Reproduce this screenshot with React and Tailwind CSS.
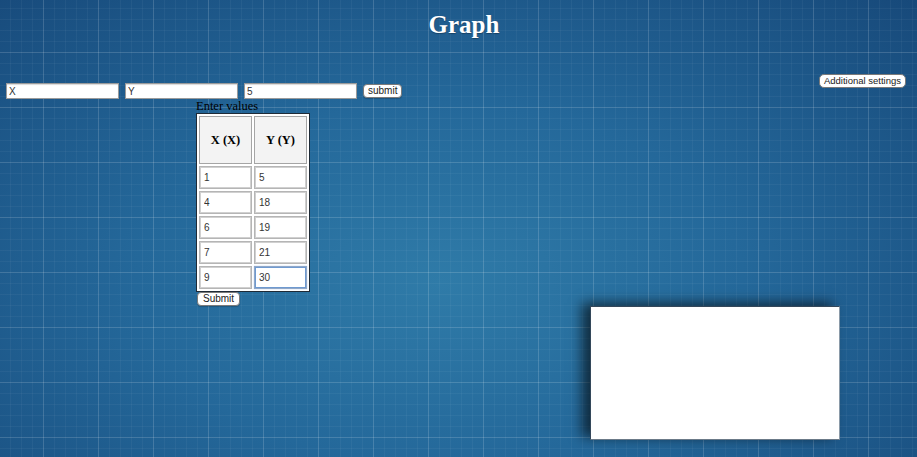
import { useState } from "react";

const ROWS = [
  { x: "1", y: "5" },
  { x: "4", y: "18" },
  { x: "6", y: "19" },
  { x: "7", y: "21" },
  { x: "9", y: "30" },
];

const inputCls =
  "h-[16px] w-[113px] border border-[#9a9a9a] bg-white px-[2px] text-[10px] text-[#333] shadow-[inset_0_1px_1px_rgba(0,0,0,0.15)] outline-none";
const btnCls =
  "rounded-[4px] border border-[#7a7a7a] bg-white px-[4px] text-[10px] leading-[12px] text-[#222] shadow-[0_1px_1px_rgba(0,0,0,0.2)]";

export default function App() {
  const [rows, setRows] = useState(ROWS);

  function setCell(i, key, value) {
    setRows(r => r.map((row, j) => (j === i ? { ...row, [key]: value } : row)));
  }

  return (
    <div className="relative h-[457px] w-full overflow-hidden bg-[linear-gradient(to_right,rgba(255,255,255,0.12)_1px,transparent_1px),linear-gradient(to_bottom,rgba(255,255,255,0.12)_1px,transparent_1px),linear-gradient(to_right,rgba(255,255,255,0.04)_1px,transparent_1px),linear-gradient(to_bottom,rgba(255,255,255,0.04)_1px,transparent_1px),radial-gradient(ellipse_at_48%_62%,#2f7ba8_0%,#24689a_45%,#17497a_100%)] bg-[size:55px_55px,55px_55px,11px_11px,11px_11px,100%_100%] bg-[position:43px_52px,43px_52px,43px_52px,43px_52px,0_0] font-['Liberation_Sans',Arial,sans-serif]">
      <h1 className="pl-[11px] pt-[11px] text-center font-['Liberation_Serif','Times_New_Roman',serif] text-[25px] font-bold leading-[28px] text-white [text-shadow:0_1px_1px_rgba(0,0,0,0.3)]">
        Graph
      </h1>

      <div className="mt-[35px] flex items-start justify-between pr-[11px]">
        <div className="mt-[9px] flex items-center gap-[6px] pl-[6px]">
          <input className={inputCls} defaultValue="X" />
          <input className={inputCls} defaultValue="Y" />
          <input className={inputCls} defaultValue="5" />
          <button className={`${btnCls} h-[14px]`}>submit</button>
        </div>
        <button className="h-[14px] rounded-[5px] border border-[#7a7a7a] bg-white px-[4px] text-[9.5px] leading-[12px] text-[#222]">
          Additional settings
        </button>
      </div>

      <div className="ml-[196px] w-fit">
        <div className="font-['Liberation_Serif','Times_New_Roman',serif] text-[12.5px] leading-[14px] text-black">
          Enter values
        </div>
        <table className="border-separate border-spacing-[2px] border border-[#1e2a36] bg-white">
          <thead>
            <tr>
              <th className="h-[48px] w-[53px] border border-[#a5a5a5] bg-[#f3f3f3] p-0 font-['Liberation_Serif','Times_New_Roman',serif] text-[12.5px] font-bold text-black">
                X (X)
              </th>
              <th className="h-[48px] w-[53px] border border-[#a5a5a5] bg-[#f3f3f3] p-0 font-['Liberation_Serif','Times_New_Roman',serif] text-[12.5px] font-bold text-black">
                Y (Y)
              </th>
            </tr>
          </thead>
          <tbody>
            {rows.map((row, i) => (
              <tr key={i}>
                {["x", "y"].map(key => {
                  const focused = i === rows.length - 1 && key === "y";
                  return (
                    <td key={key} className="border border-[#b5b5b5] p-0">
                      <input
                        value={row[key]}
                        onChange={e => setCell(i, key, e.target.value)}
                        className={`block h-[21px] w-[51px] bg-white px-[3px] text-[10px] text-[#333] outline-none ${
                          focused
                            ? "border border-[#6f9ad0] shadow-[0_0_1px_1px_rgba(120,160,215,0.6)]"
                            : "border border-[#d0d0d0]"
                        }`}
                      />
                    </td>
                  );
                })}
              </tr>
            ))}
          </tbody>
        </table>
        <button className={`${btnCls} ml-[1px] block h-[14px] px-[5px]`}>Submit</button>
      </div>

      <div className="ml-[590px] h-[134px] w-[250px] border border-b-[#6b7a88] border-l-[#33475a] border-r-[#8a9aa8] border-t-[#33475a] bg-white shadow-[-8px_-3px_12px_rgba(0,0,0,0.6)]" />
    </div>
  );
}
